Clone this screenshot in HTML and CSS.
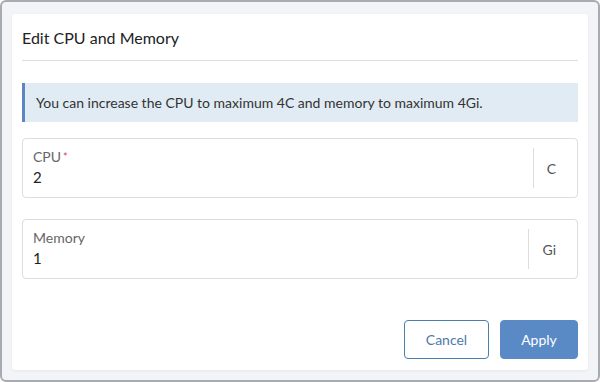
FILE: index.html
```html
<!DOCTYPE html>
<html lang="en">
<head>
    <meta charset="UTF-8">
    <meta name="viewport" content="width=device-width, initial-scale=1.0">
    <title>Edit CPU and Memory</title>
    <link rel="stylesheet" href="styles.css">
</head>
<body>
    <div class="frame">
        <div class="dialog">
            <div class="dialog-header">
                <h2>Edit CPU and Memory</h2>
            </div>

            <div class="dialog-body">
                <div class="notice">
                    You can increase the CPU to maximum 4C and memory to maximum 4Gi.
                </div>

                <div class="field">
                    <div class="field-main">
                        <label class="field-label">CPU<span class="required">*</span></label>
                        <div class="field-value">2</div>
                    </div>
                    <div class="field-addon">C</div>
                </div>

                <div class="field">
                    <div class="field-main">
                        <label class="field-label">Memory</label>
                        <div class="field-value">1</div>
                    </div>
                    <div class="field-addon">Gi</div>
                </div>
            </div>

            <div class="dialog-footer">
                <button class="btn secondary">Cancel</button>
                <button class="btn primary">Apply</button>
            </div>
        </div>
    </div>
</body>
</html>
```

FILE: styles.css
```css
* {
    margin: 0;
    padding: 0;
    box-sizing: border-box;
}

body {
    font-family: Lato, 'Open Sans', sans-serif;
    background: #ffffff;
    color: #222;
    width: 600px;
    height: 382px;
    overflow: hidden;
}

.frame {
    width: 600px;
    height: 382px;
    border: 2px solid #a9abb2;
    border-radius: 6px;
    background: #f3f4f7;
    padding: 12px 10px 10px 10px;
}

.dialog {
    height: 356px;
    background: #fff;
    border-radius: 3px;
    box-shadow: 0 1px 3px rgba(0,0,0,0.06);
    display: flex;
    flex-direction: column;
    padding: 0 10px;
}

.dialog-header {
    height: 47px;
    border-bottom: 1px solid #dddddd;
    display: flex;
    align-items: center;
    padding-top: 1px;
}

.dialog-header h2 {
    font-size: 16px;
    font-weight: 400;
    color: #222;
}

.dialog-body {
    padding-top: 22px;
    display: flex;
    flex-direction: column;
}

.notice {
    height: 39px;
    background: #e0ebf4;
    border-left: 3px solid #5a87c2;
    padding: 0 11px;
    display: flex;
    align-items: center;
    font-size: 14px;
    color: #333;
}

.field {
    height: 60px;
    border: 1px solid #dcdcdc;
    border-radius: 4px;
    display: flex;
    align-items: stretch;
    padding: 0 10px;
    margin-top: 16px;
}

.field + .field {
    margin-top: 21px;
}

.field-main {
    flex: 1;
    padding-top: 10px;
}

.field-label {
    display: block;
    font-size: 14px;
    line-height: 16px;
    color: #666;
}

.required {
    color: #d04a6a;
    font-size: 11px;
    vertical-align: top;
    margin-left: 2px;
}

.field-value {
    font-size: 15px;
    line-height: 18px;
    margin-top: 3px;
    color: #222;
}

.field-addon {
    margin: 9px 0;
    border-left: 1px solid #dcdcdc;
    padding: 0 11px 0 13px;
    display: flex;
    align-items: center;
    font-size: 14px;
    color: #555;
}

.dialog-footer {
    margin-top: auto;
    padding-bottom: 11px;
    display: flex;
    justify-content: flex-end;
    gap: 11px;
}

.btn {
    height: 39px;
    border-radius: 4px;
    font-family: inherit;
    font-size: 14px;
    cursor: pointer;
}

.btn.secondary {
    width: 85px;
    background: #fff;
    border: 1px solid #4a7eae;
    color: #4c7aa8;
}

.btn.primary {
    width: 78px;
    background: #5a8ac6;
    border: 1px solid #5a8ac6;
    color: #fff;
}
```
